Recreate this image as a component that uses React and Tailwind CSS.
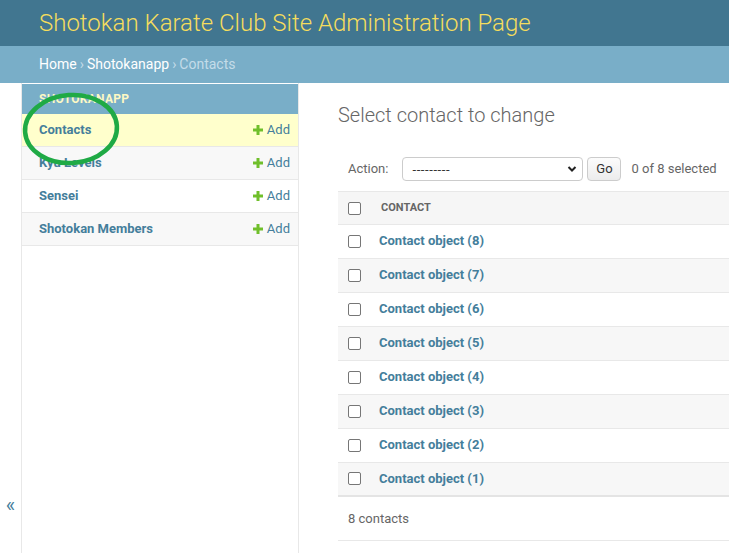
const models = [
  { name: 'Contacts', bg: 'bg-[#ffffcc]' },
  { name: 'Kyu Levels', bg: 'bg-[#f8f8f8]' },
  { name: 'Sensei', bg: 'bg-white' },
  { name: 'Shotokan Members', bg: 'bg-[#f8f8f8]' },
];

const rows = [8, 7, 6, 5, 4, 3, 2, 1];

function PlusIcon() {
  return (
    <svg width="10" height="10" viewBox="0 0 10 10" className="shrink-0">
      <path d="M3.5 0h3v3.5H10v3H6.5V10h-3V6.5H0v-3h3.5z" fill="#70bf2b" />
    </svg>
  );
}

function Checkbox() {
  return <span className="block w-[13px] h-[13px] border border-[#767676] rounded-[2px] bg-white" />;
}

function Sidebar() {
  return (
    <nav className="w-[277px] shrink-0 border-r border-[#e8e8e8] pt-px">
      {/* App module */}
      <div className="h-[30px] bg-[#79aec8] pl-[17px] flex items-center">
        <span className="text-[12px] font-bold uppercase tracking-[0.3px] text-[#fdf9c4]">Shotokanapp</span>
      </div>
      {models.map((m) => (
        <div
          key={m.name}
          className={`h-[33px] border-b border-[#e8e8e8] flex items-center justify-between pl-[17px] pr-[8px] ${m.bg}`}
        >
          <span className="text-[13px] font-bold text-[#447e9b]">{m.name}</span>
          <span className="flex items-center gap-[4px] text-[13px] text-[#447e9b]">
            <PlusIcon />
            Add
          </span>
        </div>
      ))}
    </nav>
  );
}

function ChangeList() {
  return (
    <div className="flex-1 min-w-0 pl-[39px] pt-[20px] overflow-hidden">
      <h1 className="text-[20px] leading-[24px] font-light text-[#666]">Select contact to change</h1>

      {/* Actions */}
      <div className="mt-[30px] h-[24px] flex items-center pl-[10px] text-[13px] text-[#666]">
        <span>Action:</span>
        <div className="ml-[14px] w-[181px] h-[24px] border border-[#ccc] rounded-[4px] bg-white flex items-center justify-between pl-[9px] pr-[5px] text-[#333]">
          <span className="text-[13px] leading-none tracking-[0.6px]">---------</span>
          <svg width="10" height="8" viewBox="0 0 10 8">
            <path d="M1.5 2l3.5 3.5L8.5 2" fill="none" stroke="#222" strokeWidth="2" />
          </svg>
        </div>
        <div className="ml-[4px] w-[34px] h-[24px] border border-[#ccc] rounded-[4px] bg-gradient-to-b from-[#fcfcfc] to-[#ececec] flex items-center justify-center text-[#333]">
          Go
        </div>
        <span className="ml-[10px]">0 of 8 selected</span>
      </div>

      {/* Results */}
      <div className="mt-[10px] border-t border-[#e8e8e8]">
        <div className="h-[33px] bg-[#f6f6f6] border-b border-[#e8e8e8] flex items-center pl-[10px]">
          <Checkbox />
          <span className="ml-[20px] text-[11px] font-bold uppercase text-[#666]">Contact</span>
        </div>
        {rows.map((n, i) => (
          <div
            key={n}
            className={`h-[34px] flex items-center pl-[10px] pb-px ${i % 2 ? 'bg-[#f7f7f7]' : 'bg-white'} ${
              i === rows.length - 1 ? 'border-b-2 border-[#e4e4e4]' : 'border-b border-[#e8e8e8]'
            }`}
          >
            <Checkbox />
            <span className="ml-[18px] text-[13px] font-bold text-[#447e9b]">Contact object ({n})</span>
          </div>
        ))}
        <div className="h-[44px] border-b border-[#e8e8e8] flex items-center pl-[10px] text-[13px] text-[#666]">
          8 contacts
        </div>
      </div>
    </div>
  );
}

export default function App() {
  return (
    <div className="relative w-[729px] h-[553px] overflow-hidden bg-white flex flex-col font-['Roboto','Liberation_Sans',sans-serif] text-[#333]">
      {/* Header */}
      <header className="h-[46px] shrink-0 bg-[#417690] flex items-center pl-[39px]">
        <span className="text-[24px] font-light text-[#f5dd5d]">Shotokan Karate Club Site Administration Page</span>
      </header>

      {/* Breadcrumbs */}
      <div className="h-[37px] shrink-0 bg-[#79aec8] flex items-center pl-[39px] text-[14px] text-white">
        <span>Home</span>
        <span className="mx-[3px] text-[#c4dce8]">›</span>
        <span>Shotokanapp</span>
        <span className="mx-[3px] text-[#c4dce8]">›</span>
        <span className="text-[#c4dce8]">Contacts</span>
      </div>

      <div className="flex flex-1 min-h-0">
        {/* Sidebar toggle */}
        <div className="w-[22px] shrink-0 border-r border-[#e8e8e8] pt-[410px] flex justify-center">
          <span className="text-[20px] leading-[24px] text-[#447e9b]">«</span>
        </div>
        <Sidebar />
        <ChangeList />
      </div>

      {/* Hand-drawn annotation */}
      <svg className="absolute left-0 top-0 pointer-events-none" width="729" height="553">
        <ellipse cx="71" cy="129" rx="46" ry="34" fill="none" stroke="#1faa45" strokeWidth="4.5" transform="rotate(-4 71 129)" />
      </svg>
    </div>
  );
}
